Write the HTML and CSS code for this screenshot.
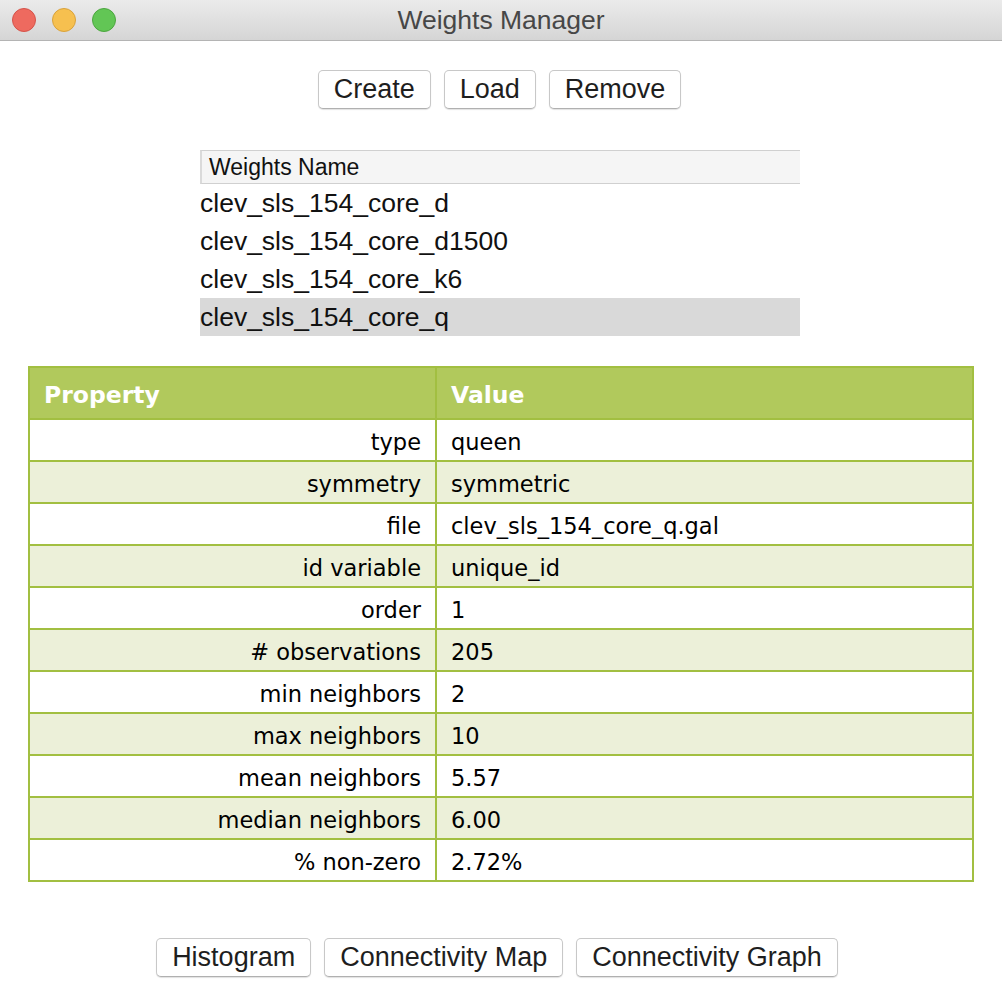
FILE: index.html
```html
<!DOCTYPE html>
<html>
<head>
<meta charset="utf-8">
<link rel="stylesheet" href="styles.css">
</head>
<body>
<div class="window">
  <div class="titlebar">
    <div class="lights">
      <span class="light red"></span>
      <span class="light yellow"></span>
      <span class="light green"></span>
    </div>
    <div class="title">Weights Manager</div>
  </div>
  <div class="toolbar">
    <button class="btn">Create</button>
    <button class="btn">Load</button>
    <button class="btn">Remove</button>
  </div>
  <div class="list">
    <div class="list-header">Weights Name</div>
    <div class="list-row">clev_sls_154_core_d</div>
    <div class="list-row">clev_sls_154_core_d1500</div>
    <div class="list-row">clev_sls_154_core_k6</div>
    <div class="list-row selected">clev_sls_154_core_q</div>
  </div>
  <table class="props">
    <thead>
      <tr><th class="pcol">Property</th><th class="vcol">Value</th></tr>
    </thead>
    <tbody>
      <tr><td class="pcol">type</td><td>queen</td></tr>
      <tr class="alt"><td class="pcol">symmetry</td><td>symmetric</td></tr>
      <tr><td class="pcol">file</td><td>clev_sls_154_core_q.gal</td></tr>
      <tr class="alt"><td class="pcol">id variable</td><td>unique_id</td></tr>
      <tr><td class="pcol">order</td><td>1</td></tr>
      <tr class="alt"><td class="pcol"># observations</td><td>205</td></tr>
      <tr><td class="pcol">min neighbors</td><td>2</td></tr>
      <tr class="alt"><td class="pcol">max neighbors</td><td>10</td></tr>
      <tr><td class="pcol">mean neighbors</td><td>5.57</td></tr>
      <tr class="alt"><td class="pcol">median neighbors</td><td>6.00</td></tr>
      <tr><td class="pcol">% non-zero</td><td>2.72%</td></tr>
    </tbody>
  </table>
  <div class="bottombar">
    <button class="btn">Histogram</button>
    <button class="btn">Connectivity Map</button>
    <button class="btn">Connectivity Graph</button>
  </div>
</div>
</body>
</html>
```
FILE: styles.css
```css
html, body {
  margin: 0;
  padding: 0;
  background: #ffffff;
}
.window {
  width: 1002px;
  height: 1000px;
  font-family: "Liberation Sans", Arial, sans-serif;
  color: #1e1e1e;
  overflow: hidden;
}
.titlebar {
  height: 40px;
  background: linear-gradient(#ebebeb, #d5d5d5);
  border-bottom: 1px solid #b4b4b4;
  display: flex;
  align-items: center;
  position: relative;
}
.lights {
  display: flex;
  gap: 16px;
  padding-left: 12px;
}
.light {
  width: 24px;
  height: 24px;
  border-radius: 50%;
  box-sizing: border-box;
}
.red { background: #ee6a5f; border: 1px solid #d5534a; }
.yellow { background: #f6c04f; border: 1px solid #d9a23b; }
.green { background: #62c655; border: 1px solid #4ca63f; }
.title {
  position: absolute;
  left: 0;
  right: 0;
  text-align: center;
  font-size: 26.5px;
  color: #474747;
  pointer-events: none;
}
.toolbar {
  display: flex;
  justify-content: center;
  gap: 13px;
  padding-top: 29px;
  padding-right: 3px;
}
.btn {
  font-family: "Liberation Sans", Arial, sans-serif;
  font-size: 27px;
  color: #1e1e1e;
  background: #ffffff;
  border: 1px solid #c8c8c8;
  border-bottom-color: #b0b0b0;
  border-radius: 5px;
  box-shadow: 0 1px 1px rgba(0,0,0,0.12);
  height: 39px;
  padding: 0 15px;
  line-height: 37px;
}
.list {
  width: 600px;
  margin: 41px 0 0 200px;
}
.list-header {
  height: 32px;
  background: #f5f5f5;
  border-top: 1px solid #d0d0d0;
  border-bottom: 1px solid #d0d0d0;
  border-left: 2px solid #dadada;
  font-size: 23px;
  line-height: 32px;
  padding-left: 7px;
  color: #111;
}
.list-row {
  height: 38px;
  line-height: 38px;
  font-size: 26.5px;
  color: #111;
}
.list-row.selected {
  background: #d9d9d9;
}
.props {
  margin: 30px 0 0 28px;
  width: 946px;
  border-collapse: collapse;
  border: 2px solid #a2bf41;
  font-family: "DejaVu Sans", Verdana, sans-serif;
  font-size: 22.5px;
  color: #000;
}
.props th {
  background: #b1c95c;
  color: #ffffff;
  font-weight: bold;
  font-size: 23.5px;
  text-align: left;
  height: 47px;
  padding: 3px 14px 0;
  border: 2px solid #a2bf41;
}
.props td {
  height: 37px;
  padding: 3px 14px 0;
  border: 2px solid #a2bf41;
  background: #ffffff;
}
.props tr.alt td {
  background: #ecf0d9;
}
.props td.pcol {
  text-align: right;
}
.props .pcol {
  width: 377px;
}
.bottombar {
  display: flex;
  justify-content: center;
  gap: 13px;
  padding-top: 56px;
  padding-right: 8px;
}
```
